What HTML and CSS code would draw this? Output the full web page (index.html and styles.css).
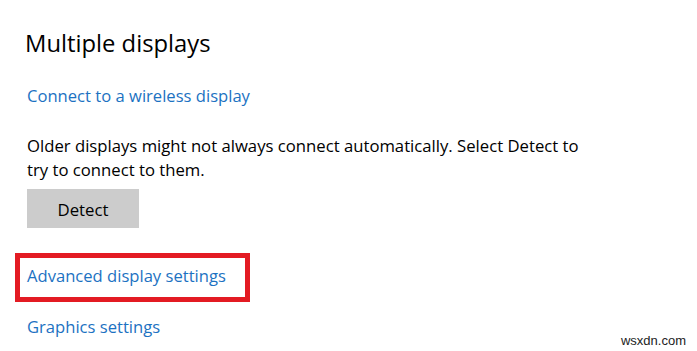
FILE: index.html
```html
<!DOCTYPE html>
<html lang="en">
<head>
<meta charset="utf-8">
<title>Multiple displays</title>
<link rel="stylesheet" href="styles.css">
</head>
<body>
<main class="page">
  <h1 class="title">Multiple displays</h1>
  <a class="link link-wireless" href="#">Connect to a wireless display</a>
  <p class="desc">Older displays might not always connect automatically. Select Detect to try to connect to them.</p>
  <button class="btn" type="button">Detect</button>
  <div class="highlight">
    <a class="link" href="#">Advanced display settings</a>
  </div>
  <a class="link link-graphics" href="#">Graphics settings</a>
</main>
<div class="watermark">wsxdn.com</div>
</body>
</html>
```
FILE: styles.css
```css
html, body {
  margin: 0;
  padding: 0;
  background: #ffffff;
}
body {
  width: 697px;
  height: 351px;
  overflow: hidden;
  position: relative;
  font-family: "Open Sans", "Noto Sans", sans-serif;
  color: #000000;
}
.page {
  display: flex;
  flex-direction: column;
  align-items: flex-start;
  padding: 27px 0 0 27px;
}
.title {
  margin: 0 0 0 -2px;
  font-size: 23.8px;
  font-weight: 400;
  line-height: 32px;
}
.link {
  display: block;
  font-size: 16.6px;
  line-height: 24px;
  color: #1c72c2;
  text-decoration: none;
}
.link-wireless {
  margin-top: 25px;
}
.desc {
  margin: 26px 0 0 0;
  width: 570px;
  font-size: 16.7px;
  line-height: 24px;
}
.btn {
  margin-top: 7px;
  width: 112px;
  height: 39px;
  padding: 2px 0 0 0;
  border: none;
  background: #cccccc;
  font-family: inherit;
  font-size: 16.8px;
  color: #000000;
}
.highlight {
  margin: 25px 0 0 -12px;
  width: 218px;
  height: 33px;
  border: 5px solid #e31b23;
  padding: 6px 0 0 7px;
  box-sizing: content-box;
}
.link-graphics {
  margin-top: 13px;
}
.watermark {
  position: absolute;
  right: 11px;
  bottom: 3px;
  font-family: "Liberation Sans", Arial, sans-serif;
  font-size: 13px;
  color: #222222;
}
```
